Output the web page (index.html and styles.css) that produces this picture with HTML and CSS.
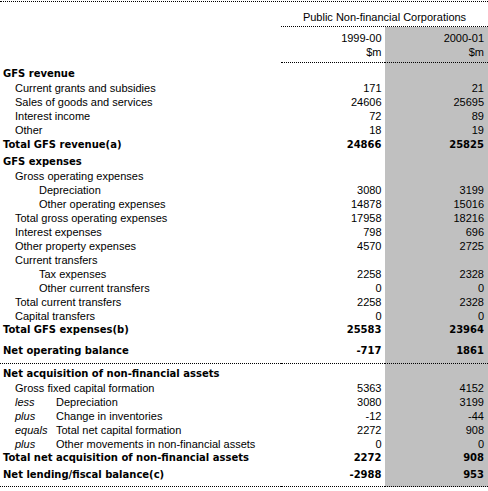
FILE: index.html
```html
<!DOCTYPE html>
<html>
    <head>
        <title>Public Non-financial Corporations</title>
        <meta charset="UTF-8">
        <link rel="stylesheet" href="styles.css">
    </head>
    <body>
        <table class="gfs">
            <tr class="head1">
                <td class="label"></td>
                <td colspan="2" class="group">Public Non-financial Corporations</td>
            </tr>
            <tr class="head2">
                <td class="label"></td>
                <td class="num">1999-00<br>$m</td>
                <td class="num cur">2000-01<br>$m</td>
            </tr>
            <tr class="first">
                <td class="label sect">GFS revenue</td>
                <td class="num"></td>
                <td class="num cur"></td>
            </tr>
            <tr><td class="label l1">Current grants and subsidies</td><td class="num">171</td><td class="num cur">21</td></tr>
            <tr><td class="label l1">Sales of goods and services</td><td class="num">24606</td><td class="num cur">25695</td></tr>
            <tr><td class="label l1">Interest income</td><td class="num">72</td><td class="num cur">89</td></tr>
            <tr><td class="label l1">Other</td><td class="num">18</td><td class="num cur">19</td></tr>
            <tr class="total pad1"><td class="label sect">Total GFS revenue(a)</td><td class="num">24866</td><td class="num cur">25825</td></tr>
            <tr class="pad3"><td class="label sect">GFS expenses</td><td class="num"></td><td class="num cur"></td></tr>
            <tr><td class="label l1">Gross operating expenses</td><td class="num"></td><td class="num cur"></td></tr>
            <tr><td class="label l2">Depreciation</td><td class="num">3080</td><td class="num cur">3199</td></tr>
            <tr><td class="label l2">Other operating expenses</td><td class="num">14878</td><td class="num cur">15016</td></tr>
            <tr><td class="label l1">Total gross operating expenses</td><td class="num">17958</td><td class="num cur">18216</td></tr>
            <tr><td class="label l1">Interest expenses</td><td class="num">798</td><td class="num cur">696</td></tr>
            <tr><td class="label l1">Other property expenses</td><td class="num">4570</td><td class="num cur">2725</td></tr>
            <tr><td class="label l1">Current transfers</td><td class="num"></td><td class="num cur"></td></tr>
            <tr><td class="label l2">Tax expenses</td><td class="num">2258</td><td class="num cur">2328</td></tr>
            <tr><td class="label l2">Other current transfers</td><td class="num">0</td><td class="num cur">0</td></tr>
            <tr><td class="label l1">Total current transfers</td><td class="num">2258</td><td class="num cur">2328</td></tr>
            <tr><td class="label l1">Capital transfers</td><td class="num">0</td><td class="num cur">0</td></tr>
            <tr class="total"><td class="label sect">Total GFS expenses(b)</td><td class="num">25583</td><td class="num cur">23964</td></tr>
            <tr class="total balance"><td class="label sect">Net operating balance</td><td class="num">-717</td><td class="num cur">1861</td></tr>
            <tr class="pad3"><td class="label sect">Net acquisition of non-financial assets</td><td class="num"></td><td class="num cur"></td></tr>
            <tr><td class="label l1">Gross fixed capital formation</td><td class="num">5363</td><td class="num cur">4152</td></tr>
            <tr><td class="label l1"><span class="op">less</span>Depreciation</td><td class="num">3080</td><td class="num cur">3199</td></tr>
            <tr><td class="label l1"><span class="op">plus</span>Change in inventories</td><td class="num">-12</td><td class="num cur">-44</td></tr>
            <tr><td class="label l1"><span class="op">equals</span>Total net capital formation</td><td class="num">2272</td><td class="num cur">908</td></tr>
            <tr><td class="label l1"><span class="op">plus</span>Other movements in non-financial assets</td><td class="num">0</td><td class="num cur">0</td></tr>
            <tr class="total"><td class="label sect">Total net acquisition of non-financial assets</td><td class="num">2272</td><td class="num cur">908</td></tr>
            <tr class="total balance pad3"><td class="label sect">Net lending/fiscal balance(c)</td><td class="num">-2988</td><td class="num cur">953</td></tr>
        </table>
    </body>
</html>
```

FILE: styles.css
```css
body{
    margin: 0;
    background: #fff;
    color: #000;
}
.gfs{
    margin-top: 1px;
    width: 488px;
    border-collapse: separate;
    border-spacing: 0;
    border-top: 1px dotted #000;
    font-family: "Liberation Sans", Arial, sans-serif;
    font-size: 11px;
    table-layout: fixed;
}
.gfs td{
    padding: 0;
    line-height: 14px;
    height: 14px;
    white-space: nowrap;
    vertical-align: top;
}
.gfs .label{
    width: 281px;
    overflow: visible;
}
.gfs .num{
    width: 100px;
    text-align: right;
    padding-right: 3px;
}
.gfs .cur{
    width: 100px;
    padding-right: 4px;
    background: #c0c0c0;
}
.head1 td{
    padding-top: 8px;
    padding-bottom: 2px;
}
.head1 .group{
    text-align: center;
    border-bottom: 1px dotted #000;
}
.head2 td{
    padding-top: 4px;
    padding-bottom: 3px;
}
.head2 .num{
    border-bottom: 1px dotted #000;
}
.first td{
    padding-top: 4px;
}
.pad1 td{
    padding-top: 1px;
}
.pad3 td{
    padding-top: 3px;
}
.gfs .sect{
    padding-left: 3px;
    font-family: "DejaVu Sans", Verdana, sans-serif;
    font-weight: bold;
    font-size: 10px;
}
.gfs .l1{
    padding-left: 15px;
}
.gfs .l2{
    padding-left: 39px;
}
.total td{
    font-family: "DejaVu Sans", Verdana, sans-serif;
    font-weight: bold;
    font-size: 10px;
}
.balance td{
    padding-top: 7px;
    padding-bottom: 5px;
    border-bottom: 1px dotted #000;
}
.balance.pad3 td{
    padding-top: 3px;
    padding-bottom: 4px;
}
.op{
    display: inline-block;
    width: 41px;
    font-style: italic;
}
```
